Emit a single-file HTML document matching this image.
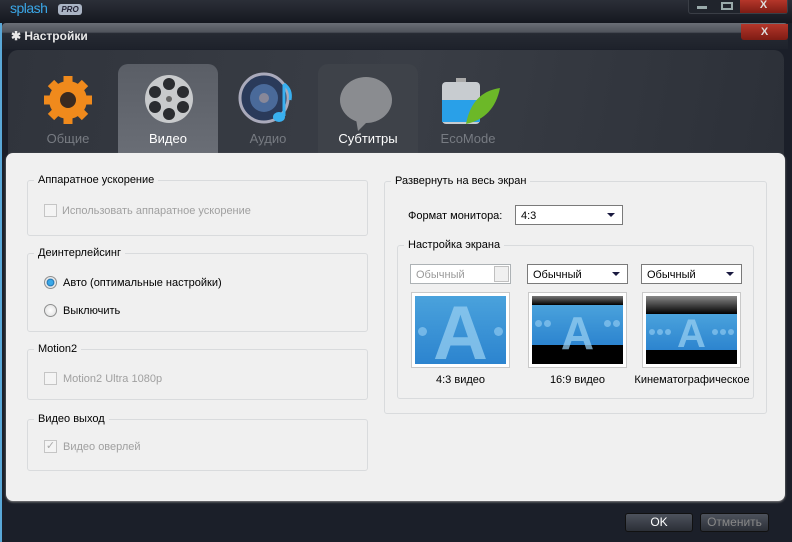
<!DOCTYPE html>
<html><head><meta charset="utf-8">
<style>
*{margin:0;padding:0;box-sizing:border-box}
body{width:792px;height:542px;overflow:hidden;background:#1b1f29;font-family:"Liberation Sans",sans-serif;font-size:11px;position:relative}
.abs{position:absolute}
.grp{position:absolute;border:1px solid #d9dbdd;border-radius:3px}
.grp>.t{position:absolute;top:-7px;left:6px;background:#f0f0f0;padding:0 4px;color:#000;font-size:11px}
.dis{color:#a0a0a0}
.cb{position:absolute;width:13px;height:13px;border:1px solid #c5c5c5;background:#f4f4f4}
.rb{position:absolute;width:13px;height:13px;border-radius:50%;border:1px solid #8e8f8f;background:radial-gradient(#fff,#ddd)}
.sel{position:absolute;height:20px;border:1px solid #7a7a7a;background:#fff;font-size:11px;padding:4px 5px 2px;color:#000}
.sel:after{content:"";position:absolute;right:7px;top:7px;border-left:4px solid transparent;border-right:4px solid transparent;border-top:4px solid #1a1a40}
.prev{position:absolute;width:99px;height:76px;border:1px solid #c9c9c9;background:#fff;padding:3px}
.pi{width:100%;height:100%;position:relative;overflow:hidden;background:linear-gradient(#4aa2dc,#2c84cf)}
.A{position:absolute;left:0;right:0;text-align:center;color:rgba(150,205,240,.75);font-weight:bold;font-family:"Liberation Sans",sans-serif}
.dots{position:absolute;left:0;right:0;display:flex;justify-content:space-between;padding:0 3px}
.dots i{display:block;border-radius:50%;background:rgba(140,200,240,.7)}
.cap{position:absolute;font-size:11px;color:#000;text-align:center}
.tab{position:absolute;top:64px;width:100px;height:92px;border-radius:10px 10px 0 0}
.tl{position:absolute;top:131px;font-size:13px;width:100px;text-align:center}
.btn{position:absolute;top:513px;height:19px;border:1px solid #111;border-radius:3px;background:linear-gradient(#4d525c,#2b2f37);text-align:center;font-size:12px;line-height:17px}
</style></head><body>
<div class="abs" style="left:0;top:0;width:792px;height:24px;background:linear-gradient(#2b2f38,#14171e)"></div>
<div class="abs" style="left:10px;top:0;color:#3aa6e6;font-size:14px;letter-spacing:-0.5px">splash</div>
<div class="abs" style="left:58px;top:4px;width:24px;height:11px;background:#aab4c4;border-radius:3px;color:#223;font-size:8px;font-weight:bold;font-style:italic;text-align:center;line-height:11px">PRO</div>
<div class="abs" style="left:688px;top:0;width:100px;height:14px;border:1px solid #3a3e46;border-top:none;border-radius:0 0 3px 3px;background:#20242c"></div>
<div class="abs" style="left:697px;top:6px;width:10px;height:3px;background:#9aa"></div>
<div class="abs" style="left:721px;top:2px;width:12px;height:8px;border:2px solid #9aa"></div>
<div class="abs" style="left:740px;top:0;width:47px;height:13px;background:linear-gradient(#b5362a,#7e1c14);color:#ddd;text-align:center;font-size:11px;font-weight:bold;line-height:11px">X</div>
<div class="abs" style="left:0;top:23px;width:792px;height:519px;background:#1b1f29;border-left:2px solid #5aa8d8"></div>
<div class="abs" style="left:2px;top:23px;width:786px;height:26px;background:linear-gradient(#6a6e76 0%,#50545c 35%,#262a33 40%,#1e222b 100%);border-radius:4px 4px 0 0"></div>
<div class="abs" style="left:11px;top:29px;color:#e8e8e8;font-weight:bold;font-size:12px">✱ Настройки</div>
<div class="abs" style="left:741px;top:24px;width:47px;height:16px;background:linear-gradient(#b5362a,#7e1c14);color:#ddd;text-align:center;font-size:11px;font-weight:bold;line-height:16px;border-radius:0 0 3px 3px">X</div>
<div class="abs" style="left:8px;top:50px;width:776px;height:110px;border-radius:10px 10px 0 0;background:linear-gradient(100deg,#30343c,#3a3e46 50%,#2c3038)"></div>
<div class="tab" style="left:118px;background:linear-gradient(#5a5e66,#6a6e76)"></div>
<div class="tab" style="left:318px;background:#3e4249"></div>
<svg class="abs" style="left:40px;top:72px" width="56" height="56" viewBox="0 0 56 56"><g fill="#f08a1c"><circle cx="28" cy="28" r="19"/><g stroke="#f08a1c" stroke-width="9"><line x1="28" y1="4" x2="28" y2="52"/><line x1="4" y1="28" x2="52" y2="28"/><line x1="11" y1="11" x2="45" y2="45"/><line x1="45" y1="11" x2="11" y2="45"/></g></g><circle cx="28" cy="28" r="8" fill="#3a2a20"/></svg>
<svg class="abs" style="left:143px;top:73px" width="52" height="52" viewBox="0 0 52 52"><circle cx="26" cy="26" r="24" fill="#c8cacc"/><g fill="#2a2c30"><circle cx="26" cy="11" r="6"/><circle cx="26" cy="41" r="6"/><circle cx="12" cy="19" r="6"/><circle cx="40" cy="19" r="6"/><circle cx="12" cy="34" r="6"/><circle cx="40" cy="34" r="6"/></g><circle cx="26" cy="26" r="3" fill="#666"/></svg>
<svg class="abs" style="left:238px;top:72px" width="60" height="56" viewBox="0 0 60 56"><circle cx="26" cy="26" r="24" fill="#2a3a5a" stroke="#aab" stroke-width="3"/><circle cx="26" cy="26" r="14" fill="#4a6a9a"/><circle cx="26" cy="26" r="5" fill="#889"/><path d="M46 12 L46 44" stroke="#39b0f0" stroke-width="3"/><ellipse cx="41" cy="45" rx="6" ry="5" fill="#39b0f0"/><path d="M46 12 Q54 18 52 28" stroke="#39b0f0" stroke-width="3" fill="none"/></svg>
<svg class="abs" style="left:338px;top:75px" width="58" height="56" viewBox="0 0 58 56"><ellipse cx="28" cy="25" rx="26" ry="23" fill="#8a8c90"/><path d="M18 44 L20 56 L30 46Z" fill="#8a8c90"/></svg>
<svg class="abs" style="left:436px;top:78px" width="66" height="48" viewBox="0 0 66 48"><rect x="20" y="0" width="10" height="5" fill="#aaa"/><rect x="6" y="4" width="38" height="42" rx="4" fill="#c8ccd0"/><rect x="6" y="22" width="38" height="22" fill="#29a0e8"/><path d="M30 46 Q36 14 64 10 Q58 40 30 46Z" fill="#6cb828"/></svg>
<div class="tl" style="left:18px;color:#777b82">Общие</div>
<div class="tl" style="left:118px;color:#fff">Видео</div>
<div class="tl" style="left:218px;color:#777b82">Аудио</div>
<div class="tl" style="left:318px;color:#fff">Субтитры</div>
<div class="tl" style="left:418px;color:#777b82">EcoMode</div>
<div class="abs" style="left:6px;top:153px;width:779px;height:348px;background:#f0f0f0;border-radius:7px;box-shadow:0 1px 2px #888"></div>
<div class="grp" style="left:27px;top:180px;width:341px;height:56px"><div class="t">Аппаратное ускорение</div></div>
<div class="cb" style="left:44px;top:204px"></div><div class="abs dis" style="left:62px;top:205px">Использовать аппаратное ускорение</div>
<div class="grp" style="left:27px;top:253px;width:341px;height:79px"><div class="t">Деинтерлейсинг</div></div>
<div class="rb" style="left:44px;top:276px;background:radial-gradient(#3aa8e8 30%,#1d6fae 45%,#e8e8e8 55%)"></div><div class="abs" style="left:63px;top:277px">Авто (оптимальные настройки)</div>
<div class="rb" style="left:44px;top:304px"></div><div class="abs" style="left:63px;top:305px">Выключить</div>
<div class="grp" style="left:27px;top:349px;width:341px;height:51px"><div class="t">Motion2</div></div>
<div class="cb" style="left:44px;top:372px"></div><div class="abs dis" style="left:63px;top:373px">Motion2 Ultra 1080p</div>
<div class="grp" style="left:27px;top:419px;width:341px;height:52px"><div class="t">Видео выход</div></div>
<div class="cb" style="left:44px;top:440px;color:#aaa;font-size:11px;line-height:11px;text-align:center">✓</div><div class="abs dis" style="left:63px;top:441px">Видео оверлей</div>
<div class="grp" style="left:384px;top:181px;width:383px;height:233px"><div class="t">Развернуть на весь экран</div></div>
<div class="abs" style="left:408px;top:210px">Формат монитора:</div>
<div class="sel" style="left:515px;top:205px;width:108px">4:3</div>
<div class="grp" style="left:397px;top:245px;width:357px;height:154px"><div class="t">Настройка экрана</div></div>
<div class="sel" style="left:410px;top:264px;width:101px;border-color:#adb2b5;color:#9a9a9a">Обычный</div>
<div class="abs" style="left:494px;top:266px;width:15px;height:16px;border:1px solid #c0c0c0;background:#f0f0f0"></div>
<div class="sel" style="left:527px;top:264px;width:101px">Обычный</div>
<div class="sel" style="left:641px;top:264px;width:101px">Обычный</div>
<div class="prev" style="left:411px;top:292px"><div class="pi"><div class="dots" style="top:31px"><i style="width:9px;height:9px"></i><i style="width:9px;height:9px"></i></div><div class="A" style="top:-6px;font-size:76px">A</div></div></div>
<div class="prev" style="left:528px;top:292px"><div class="pi" style="background:#000"><div class="abs" style="left:0;right:0;top:9px;height:40px;background:linear-gradient(#4aa2dc,#2c84cf)"></div><div class="abs" style="left:0;right:0;top:0;height:9px;background:linear-gradient(#777,#000)"></div><div class="dots" style="top:24px"><span style="display:flex;gap:2px"><i style="width:7px;height:7px"></i><i style="width:7px;height:7px"></i></span><span style="display:flex;gap:2px"><i style="width:7px;height:7px"></i><i style="width:7px;height:7px"></i></span></div><div class="A" style="top:10px;font-size:46px">A</div></div></div>
<div class="prev" style="left:642px;top:292px"><div class="pi" style="background:#000"><div class="abs" style="left:0;right:0;top:18px;height:36px;background:linear-gradient(#4aa2dc,#2c84cf)"></div><div class="abs" style="left:0;right:0;top:0;height:18px;background:linear-gradient(#888,#000)"></div><div class="dots" style="top:33px"><span style="display:flex;gap:2px"><i style="width:6px;height:6px"></i><i style="width:6px;height:6px"></i><i style="width:6px;height:6px"></i></span><span style="display:flex;gap:2px"><i style="width:6px;height:6px"></i><i style="width:6px;height:6px"></i><i style="width:6px;height:6px"></i></span></div><div class="A" style="top:16px;font-size:40px">A</div></div></div>
<div class="cap" style="left:411px;top:374px;width:99px">4:3 видео</div>
<div class="cap" style="left:528px;top:374px;width:99px">16:9 видео</div>
<div class="cap" style="left:628px;top:374px;width:128px">Кинематографическое</div>
<div class="btn" style="left:625px;width:68px;color:#fff">OK</div>
<div class="btn" style="left:700px;width:69px;color:#888">Отменить</div>
</body></html>
